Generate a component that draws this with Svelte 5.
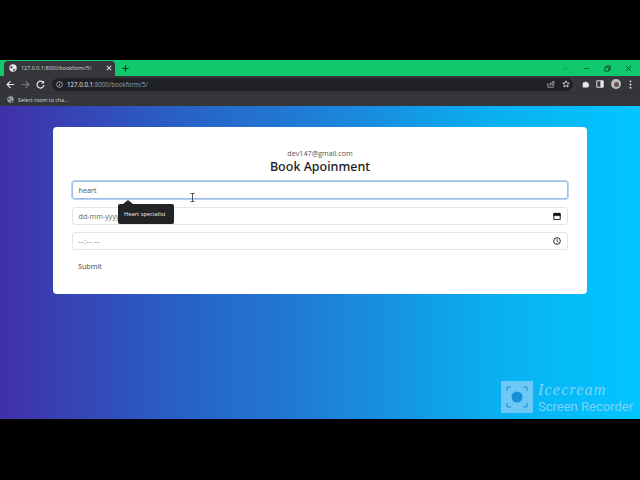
<script>
  let title = 'Book Apoinment';
</script>

<div class="screen">
  <div class="bar-black top"></div>

  <div class="chrome">
    <div class="tabstrip">
      <div class="tab">
        <svg class="globe" width="8" height="8" viewBox="0 0 10 10"><circle cx="5" cy="5" r="4.600" fill="#e8eaed"/><path d="M2 2.500l2.500 1L4 5.500 2 5zM5.500 6l2.500.5-1.500 2.500-1-.5z" fill="#35363a"/></svg>
        <span class="tab-title">127.0.0.1:8000/bookform/5/</span>
        <svg class="tab-x" width="6" height="6" viewBox="0 0 8 8"><path d="M1 1l6 6M7 1L1 7" stroke="#e8eaed" stroke-width="1.400"/></svg>
      </div>
      <svg class="plus" width="7" height="7" viewBox="0 0 8 8"><path d="M4 .5v7M.5 4h7" stroke="#0b3d22" stroke-width="1.300"/></svg>
      <div class="win">
        <svg width="7" height="7" viewBox="0 0 8 8"><path d="M1 2.500l3 3 3-3" fill="none" stroke="#0a8a4a" stroke-width="1"/></svg>
        <svg width="7" height="7" viewBox="0 0 8 8"><path d="M1 4h6" stroke="#0a6a3a" stroke-width="1"/></svg>
        <svg width="7" height="7" viewBox="0 0 8 8"><path d="M1 2.500h4.500V7H1zM2.500 2.500V1H7v4.500H5.500" fill="none" stroke="#0a4a2a" stroke-width="1"/></svg>
        <svg width="7" height="7" viewBox="0 0 8 8"><path d="M1 1l6 6M7 1L1 7" stroke="#0a4a2a" stroke-width="1"/></svg>
      </div>
    </div>

    <div class="toolbar">
      <svg width="9" height="9" viewBox="0 0 10 10"><path d="M9 5H1.500M5 1.200L1.200 5 5 8.800" fill="none" stroke="#e8eaed" stroke-width="1.300"/></svg>
      <svg width="9" height="9" viewBox="0 0 10 10"><path d="M1 5h7.500M5 1.200L8.800 5 5 8.800" fill="none" stroke="#75777a" stroke-width="1.300"/></svg>
      <svg width="9" height="9" viewBox="0 0 10 10"><path d="M8.300 3.200A3.800 3.800 0 1 0 8.800 5.500" fill="none" stroke="#e8eaed" stroke-width="1.300"/><path d="M9 .8v3.200H5.800z" fill="#e8eaed"/></svg>
      <div class="omnibox">
        <svg width="7" height="7" viewBox="0 0 8 8"><circle cx="4" cy="4" r="3.300" fill="none" stroke="#c4c6c9" stroke-width=".8"/><path d="M4 3.500v2.500M4 2v.9" stroke="#c4c6c9" stroke-width=".8"/></svg>
        <span class="url"><b>127.0.0.1</b>:8000/bookform/5/</span>
        <svg class="share" width="8" height="8" viewBox="0 0 10 10"><path d="M1 4v5h7V7M3.500 6.500c0-2.500 2-3.500 4-3.500V1.200L9.500 4 7.500 6.500V5c-1.700 0-3 .3-4 1.500z" fill="none" stroke="#c4c6c9" stroke-width=".9"/></svg>
        <svg width="8" height="8" viewBox="0 0 10 10"><path d="M5 1l1.200 2.700 2.900.3-2.200 1.900.7 2.900L5 7.300 2.400 8.800l.7-2.900L.9 4l2.900-.3z" fill="none" stroke="#e8eaed" stroke-width="1"/></svg>
      </div>
      <svg width="8" height="8" viewBox="0 0 10 10"><path d="M1 3h2.200a1.200 1.200 0 0 1 2.400 0H8v2.200a1.200 1.200 0 0 1 0 2.400V9.500H1z" fill="#e8eaed"/></svg>
      <svg width="8" height="8" viewBox="0 0 10 10"><path d="M1 1h8v8H1z" fill="none" stroke="#e8eaed" stroke-width="1.200"/><path d="M5.500 1H9v8H5.500z" fill="#e8eaed"/></svg>
      <div class="avatar"><span></span></div>
      <svg width="3" height="9" viewBox="0 0 3 10"><circle cx="1.500" cy="1.500" r="1" fill="#e8eaed"/><circle cx="1.500" cy="5" r="1" fill="#e8eaed"/><circle cx="1.500" cy="8.500" r="1" fill="#e8eaed"/></svg>
    </div>

    <div class="bookmarks">
      <svg width="7" height="7" viewBox="0 0 10 10"><circle cx="5" cy="5" r="4.600" fill="#9aa0a6"/><path d="M2 2.500l2.500 1L4 5.500 2 5zM5.500 6l2.500.5-1.500 2.500-1-.5z" fill="#35363a"/></svg>
      <span>Select room to cha...</span>
    </div>
  </div>

  <main class="page">
    <div class="card">
      <div class="email">dev147@gmail.com</div>
      <h1>{title}</h1>
      <form class="fields">
        <div class="field focused">heart</div>
        <div class="field muted">
          <span>dd-mm-yyyy</span>
          <svg width="8" height="8" viewBox="0 0 10 10"><path d="M1 2h8v7.500H1z" fill="none" stroke="#111" stroke-width="1.200"/><path d="M1 2h8v2.300H1zM2.800.5v2M7.200.5v2" fill="#111" stroke="#111" stroke-width=".8"/></svg>
        </div>
        <div class="field muted">
          <span class="time">--:-- --</span>
          <svg width="8" height="8" viewBox="0 0 10 10"><circle cx="5" cy="5" r="4.200" fill="none" stroke="#111" stroke-width="1.100"/><path d="M5 2.500V5.200l1.800 1.500" fill="none" stroke="#111" stroke-width="1"/></svg>
        </div>
      </form>
      <div class="submit">Submit</div>

      <div class="tooltip">Heart specialist</div>
      <svg class="cursor" width="5" height="9" viewBox="0 0 5 9"><path d="M.5.5h4M.5 8.500h4M2.500.5v8" stroke="#444" stroke-width=".9" fill="none"/></svg>
    </div>

    <div class="watermark">
      <div class="wm-logo">
        <svg width="32" height="32" viewBox="0 0 32 32">
          <path d="M6 10V6h4M22 6h4v4M26 22v4h-4M10 26H6v-4" fill="none" stroke="#1f8fd0" stroke-width="1"/>
          <circle cx="16" cy="16" r="5.500" fill="#1890d8"/>
        </svg>
      </div>
      <div class="wm-text">
        <div class="wm-ice">Icecream</div>
        <div class="wm-rec">Screen Recorder</div>
      </div>
    </div>
  </main>

  <div class="bar-black bottom"></div>
</div>

<style>
  :global(body) {
    margin: 0;
    background: #000;
  }

  .screen {
    width: 640px;
    height: 480px;
    display: flex;
    flex-direction: column;
    overflow: hidden;
    font-family: "Open Sans", "Liberation Sans", sans-serif;
  }

  .bar-black { background: #000; flex-shrink: 0; }
  .top { height: 60px; }
  .bottom { height: 61px; }

  /* Browser chrome */
  .chrome { flex-shrink: 0; }

  .tabstrip {
    height: 16px;
    background: #0fc96c;
    display: flex;
    align-items: flex-end;
    padding-left: 4px;
  }
  .tab {
    width: 111px;
    height: 15px;
    box-sizing: border-box;
    background: #35363a;
    border-radius: 4px 4px 0 0;
    display: flex;
    align-items: center;
    gap: 4px;
    padding: 0 3px 1px 5px;
  }
  .tab-title {
    flex: 1;
    font-size: 5.400px;
    color: #d8dade;
    white-space: nowrap;
  }
  .plus { margin: 0 0 4px 7px; }
  .win {
    margin-left: auto;
    align-self: center;
    display: flex;
    gap: 14px;
    padding-right: 8px;
  }

  .toolbar {
    height: 16px;
    background: #35363a;
    display: flex;
    align-items: center;
    gap: 6px;
    padding: 0 8px 0 6px;
  }
  .omnibox {
    flex: 1;
    height: 13px;
    margin: 0 3px 0 1px;
    background: #202124;
    border-radius: 7px;
    display: flex;
    align-items: center;
    gap: 4px;
    padding: 0 3px 0 4px;
  }
  .url {
    flex: 1;
    font-size: 6.200px;
    color: #9aa0a6;
  }
  .url b { color: #e8eaed; font-weight: 400; }
  .share { margin-right: 3px; }
  .avatar {
    width: 10px;
    height: 10px;
    margin: 0 2px 0 1px;
    border-radius: 50%;
    background: #b9bcc2;
    display: flex;
    align-items: center;
    justify-content: center;
  }
  .avatar span {
    width: 5px;
    height: 5px;
    border-radius: 50%;
    background: #6a5048;
  }

  .bookmarks {
    height: 14px;
    background: #35363a;
    border-top: 1px solid #2f3033;
    box-sizing: border-box;
    display: flex;
    align-items: center;
    gap: 4px;
    padding-left: 7px;
    font-size: 5.300px;
    color: #d8dade;
  }

  /* Page */
  .page {
    position: relative;
    flex: 1;
    min-height: 0;
    background: linear-gradient(90deg, #4030a8 0%, #2a5cc4 25%, #1e80d8 50%, #0ab0f2 78%, #00c6ff 100%);
    padding: 21px 53px 0;
  }

  .card {
    position: relative;
    height: 167px;
    box-sizing: border-box;
    background: #fff;
    border-radius: 4px;
    padding: 21px 19px 0;
    text-align: center;
    color: #212529;
  }
  .email {
    font-size: 7.200px;
    line-height: 10px;
    color: #555;
  }
  h1 {
    margin: 0 0 6px;
    font-family: "Noto Sans", "Open Sans", sans-serif;
    font-size: 12.500px;
    line-height: 17px;
    font-weight: 500;
    color: #1a1a1a;
  }

  .fields {
    display: flex;
    flex-direction: column;
    gap: 7.500px;
  }
  .field {
    height: 18px;
    box-sizing: border-box;
    border: 1px solid #e3e6e9;
    border-radius: 3px;
    display: flex;
    align-items: center;
    justify-content: space-between;
    padding: 0 6px 0 5.500px;
    font-size: 7.200px;
    color: #495057;
    text-align: left;
  }
  .field.muted { color: #666; }
  .time { letter-spacing: 0.5px; }
  .field.focused {
    border-color: #9dbdea;
    box-shadow: 0 0 0 1px #b8d0f2;
  }
  .submit {
    margin-top: 11px;
    padding-left: 6px;
    text-align: left;
    font-size: 7.200px;
    color: #444;
  }

  .tooltip {
    position: absolute;
    left: 65px;
    top: 77px;
    width: 56px;
    height: 20px;
    box-sizing: border-box;
    background: #212325;
    border-radius: 2px;
    padding-left: 6px;
    display: flex;
    align-items: center;
    font-size: 5.800px;
    color: #f2f2f2;
  }
  .tooltip::before {
    content: '';
    position: absolute;
    left: 5px;
    top: -4px;
    border-left: 5px solid transparent;
    border-right: 5px solid transparent;
    border-bottom: 4px solid #212325;
  }
  .cursor {
    position: absolute;
    left: 137px;
    top: 66px;
  }

  /* Recorder watermark */
  .watermark {
    position: absolute;
    left: 501px;
    top: 275px;
    display: flex;
    gap: 5px;
  }
  .wm-logo {
    width: 32px;
    height: 32px;
    background: #6cc8f4;
  }
  .wm-text { color: #7fd2f7; }
  .wm-ice {
    font-family: "Liberation Serif", serif;
    font-style: italic;
    font-size: 16px;
    letter-spacing: 1.200px;
    line-height: 17px;
  }
  .wm-rec {
    font-family: Roboto, "Open Sans", sans-serif;
    font-size: 13px;
    line-height: 17px;
    white-space: nowrap;
  }
</style>
